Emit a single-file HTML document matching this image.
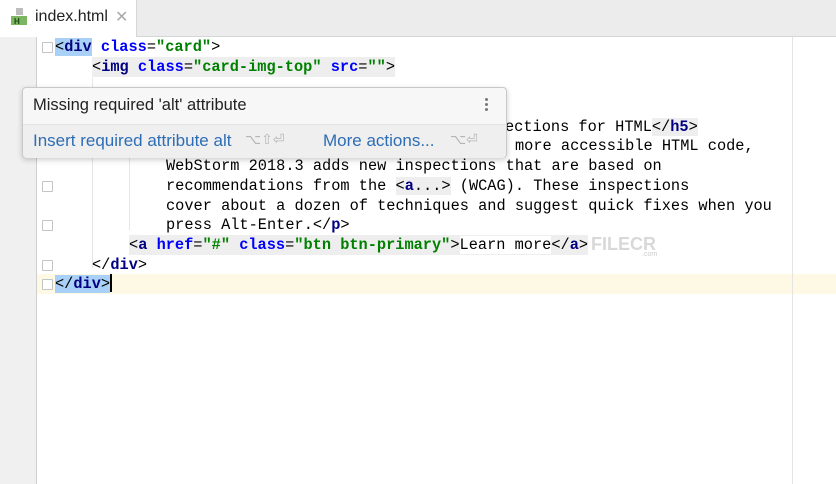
<!DOCTYPE html>
<html><head><style>
body{margin:0;width:836px;height:484px;overflow:hidden;background:#fff;position:relative;font-family:"Liberation Sans",sans-serif}
.tabbar{position:absolute;left:0;top:0;width:836px;height:36px;background:#ececec;border-bottom:1px solid #d6d6d6}
.tab{position:absolute;left:0;top:0;width:136px;height:37px;background:#fff;border-right:1px solid #d6d6d6}
.gutter{position:absolute;left:0;top:37px;width:36px;height:447px;background:#f0f0f0;border-right:1px solid #cfcfcf}
.cur{position:absolute;left:0;top:274px;width:836px;height:20px;background:#fdf9e4}
.margin{position:absolute;left:792px;top:37px;width:1px;height:447px;background:#e4e4e4}
.ln{position:absolute;font-family:"Liberation Mono",monospace;font-size:15.3px;line-height:20px;white-space:pre;color:#000;height:20px}
.t{color:#000080;font-weight:bold}.a{color:#0000ff;font-weight:bold}.v{color:#008000;font-weight:bold}
.hl{background:#eeeeee}
.sel{background:#a9d1f7}
.fold{position:absolute;left:42px;width:9px;height:9px;border:1px solid #c4c4c4;background:#fff;border-radius:1px}
.guide{position:absolute;width:1px;background:#e6e6e6}
.pop{position:absolute;left:22px;top:87px;width:483px;height:69px;background:#f7f7f7;border:1px solid #c9c9c9;border-radius:4px;box-shadow:0 2px 6px rgba(0,0,0,.2)}
.pop .bot{position:absolute;left:0;top:36px;width:483px;height:33px;background:#efefef;border-top:1px solid #e2e2e2;border-radius:0 0 4px 4px}
</style></head><body>
<div class="tabbar"></div>
<div class="tab">
 <svg style="position:absolute;left:11px;top:8px" width="18" height="18"><rect x="5" y="0" width="7" height="7" fill="#bdbdbd"/><rect x="0" y="8" width="16" height="9" fill="#7bb661"/><text x="3" y="16" font-size="8" font-family="Liberation Sans" font-weight="bold" fill="#1f4a10">H</text></svg>
 <span style="position:absolute;left:35px;top:8px;font-size:16px;color:#222">index.html</span>
 <span style="position:absolute;left:115px;top:7px;font-size:16px;color:#aaa">✕</span>
</div>
<div class="cur"></div>
<div class="gutter"></div>
<div class="margin"></div>
<div class="guide" style="left:92px;top:78px;height:190px"></div>
<div class="guide" style="left:129px;top:98px;height:132px"></div>
<div class="fold" style="top:42px"></div>
<div class="fold" style="top:181px"></div>
<div class="fold" style="top:220px"></div>
<div class="fold" style="top:260px"></div>
<div class="fold" style="top:279px"></div>

<div class="ln" style="left:55px;top:37px"><span class="sel">&lt;<span class="t">div</span></span> <span class="a">class</span>=<span class="v">"card"</span>&gt;</div>
<div class="ln hl" style="left:92px;top:57px">&lt;<span class="t">img</span> <span class="a">class</span>=<span class="v">"card-img-top"</span> <span class="a">src</span>=<span class="v">""</span>&gt;</div>
<div class="ln" style="left:505px;top:117px">ections for HTML<span class="hl">&lt;/<span class="t">h5</span>&gt;</span></div>
<div class="ln" style="left:515px;top:136px">more accessible HTML code,</div>
<div class="ln" style="left:166px;top:156px">WebStorm 2018.3 adds new inspections that are based on</div>
<div class="ln" style="left:166px;top:176px">recommendations from the <span class="hl">&lt;<span class="t">a</span>...&gt;</span> (WCAG). These inspections</div>
<div class="ln" style="left:166px;top:196px">cover about a dozen of techniques and suggest quick fixes when you</div>
<div class="ln" style="left:166px;top:215px">press Alt-Enter.&lt;/<span class="t">p</span>&gt;</div>
<div class="ln hl" style="left:129px;top:235px">&lt;<span class="t">a</span> <span class="a">href</span>=<span class="v">"#"</span> <span class="a">class</span>=<span class="v">"btn btn-primary"</span>&gt;<span style="background:#fff">Learn more</span>&lt;/<span class="t">a</span>&gt;</div>
<div style="position:absolute;left:591px;top:234px;font-size:18px;font-weight:bold;color:#d8d8d8">FILECR</div>
<div style="position:absolute;left:642px;top:251px;font-size:7px;color:#ccc">.com</div>
<div class="ln" style="left:92px;top:255px">&lt;/<span class="t">div</span>&gt;</div>
<div class="ln" style="left:55px;top:274px"><span class="sel">&lt;/<span class="t">div</span>&gt;</span><span style="display:inline-block;width:2px;height:18px;background:#000;vertical-align:-4px"></span></div>

<div class="pop">
 <div style="position:absolute;left:10px;top:8px;font-size:16.5px;color:#222">Missing required 'alt' attribute</div>
 <div style="position:absolute;left:462px;top:10px;width:4px">
  <div style="width:3px;height:3px;border-radius:50%;background:#777;margin-bottom:2px"></div>
  <div style="width:3px;height:3px;border-radius:50%;background:#777;margin-bottom:2px"></div>
  <div style="width:3px;height:3px;border-radius:50%;background:#777"></div>
 </div>
 <div class="bot">
  <span style="position:absolute;left:10px;top:6px;font-size:17px;color:#2d6db5">Insert required attribute alt</span>
  <span style="position:absolute;left:222px;top:6px;font-size:14px;color:#b5b5b5">⌥⇧⏎</span>
  <span style="position:absolute;left:300px;top:6px;font-size:17px;color:#2d6db5">More actions...</span>
  <span style="position:absolute;left:427px;top:6px;font-size:14px;color:#b5b5b5">⌥⏎</span>
 </div>
</div>
</body></html>
